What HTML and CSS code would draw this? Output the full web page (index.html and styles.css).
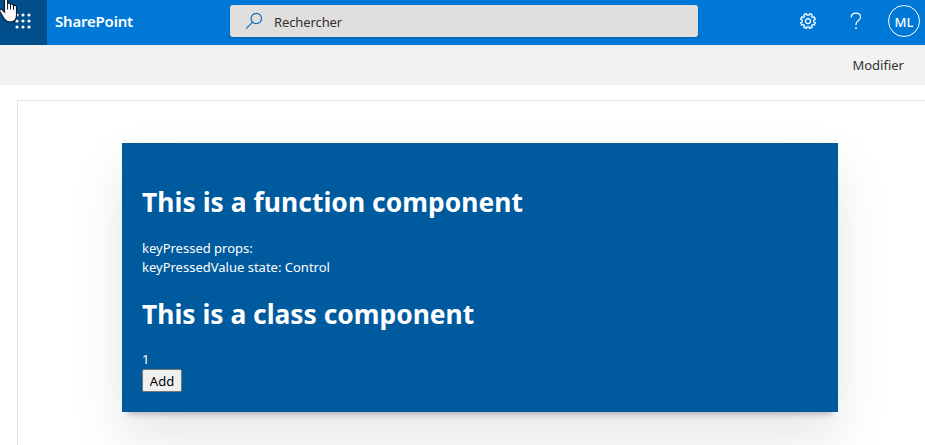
FILE: index.html
```html
<!DOCTYPE html>
<html lang="fr">
<head>
<meta charset="utf-8">
<title>SharePoint</title>
<link rel="stylesheet" href="styles.css">
</head>
<body>
<header class="suite">
  <div class="launcher">
    <svg class="waffle" width="16" height="16" viewBox="0 0 16 16" fill="#fff"><circle cx="2" cy="2" r="1.6"/><circle cx="8" cy="2" r="1.6"/><circle cx="14" cy="2" r="1.6"/><circle cx="2" cy="8" r="1.6"/><circle cx="8" cy="8" r="1.6"/><circle cx="14" cy="8" r="1.6"/><circle cx="2" cy="14" r="1.6"/><circle cx="8" cy="14" r="1.6"/><circle cx="14" cy="14" r="1.6"/></svg>
    <svg class="cursor" width="18" height="24" viewBox="0 0 18 24"><path d="M4.5-2V12L2.3 9.8C1.2 8.7-.8 9.5-.4 11L4.4 19.2C6 21.3 8 22 10 22C14 22 16.5 19.5 16.5 15.5V7C16.5 5.2 14 4.8 13.4 6V5C13 3.5 11 3.4 10.4 4.8V4C10 2.7 8.2 2.7 7.6 3.8V-2Z" fill="#fff" stroke="#101820" stroke-width="1.2"/><path d="M7.6 3.5V9.5M10.5 4.5V9.5M13.5 5.5V10" fill="none" stroke="#101820"/></svg>
  </div>
  <span class="brand">SharePoint</span>
  <div class="search">
    <svg width="18" height="18" viewBox="0 0 18 18" fill="none" stroke="#1469b5" stroke-width="1.2"><circle cx="11.3" cy="6.5" r="5.2"/><path d="M7.6 10.2 1.1 16.7"/></svg>
    <span class="query">Rechercher</span>
  </div>
  <nav class="actions">
    <svg class="gear" width="18" height="18" viewBox="-9 -9 18 18" fill="none" stroke="#fff" stroke-width="1.25" stroke-linejoin="round"><path d="M5.8 1 7.4 1.5 6.3 4.2 4.8 3.4 3.4 4.8 4.2 6.3 1.5 7.4 1 5.8H-1L-1.5 7.4-4.2 6.3-3.4 4.8-4.8 3.4-6.3 4.2-7.4 1.5-5.8 1V-1L-7.4-1.5-6.3-4.2-4.8-3.4-3.4-4.8-4.2-6.3-1.5-7.4-1-5.8H1L1.5-7.4 4.2-6.3 3.4-4.8 4.8-3.4 6.3-4.2 7.4-1.5 5.8-1Z"/><circle r="2.5"/></svg>
    <svg class="help" width="12" height="18" viewBox="0 0 12 18" fill="none" stroke="#fff" stroke-width="1.2"><path d="M1.2 5.5C1.2 2.6 3.1 1.2 5.8 1.2S10.5 2.8 10.5 5.2C10.5 8.7 6 8.8 6 12.3V13.2"/><path d="M6 15.3V17" stroke-width="1.5"/></svg>
    <span class="avatar">ML</span>
  </nav>
</header>
<div class="commands"><span class="edit">Modifier</span></div>
<main class="canvas">
  <section class="card">
    <h1 class="title title-function">This is a function component</h1>
    <p class="line">keyPressed props:</p>
    <p class="line">keyPressedValue state: Control</p>
    <h1 class="title title-class">This is a class component</h1>
    <p class="line">1</p>
    <button class="add" type="button">Add</button>
  </section>
</main>
</body>
</html>
```
FILE: styles.css
```css
* { box-sizing: border-box; }
body {
  margin: 0;
  height: 445px;
  overflow: hidden;
  display: flex;
  flex-direction: column;
  background: #fff;
  font-family: "Noto Sans", "Open Sans", sans-serif;
  font-size: 13px;
  color: #323130;
}
.suite {
  height: 45px;
  flex: none;
  display: flex;
  align-items: flex-start;
  background: #0078d7;
  color: #fff;
}
.launcher {
  position: relative;
  width: 47px;
  height: 45px;
  padding: 13px 0 0 15px;
  background: #004e8c;
}
.waffle { display: block; }
.cursor { position: absolute; left: 0; top: 0; }
.brand {
  width: 175px;
  margin-left: 8px;
  line-height: 42px;
  font-size: 15px;
  font-weight: 600;
  letter-spacing: -0.2px;
}
.search {
  width: 468px;
  height: 32px;
  margin-top: 5px;
  padding-left: 15px;
  display: flex;
  align-items: center;
  border-radius: 3px;
  background: #e1dfdd;
  box-shadow: 0 1px 3px rgba(0, 0, 0, .2);
}
.search svg { margin-top: -1px; }
.query {
  margin-left: 11px;
  padding-top: 2px;
  letter-spacing: -0.1px;
  color: #323130;
}
.actions {
  margin-left: auto;
  padding: 5px 5px 0 0;
  display: flex;
  align-items: center;
}
.gear { margin-right: 33px; }
.help { margin-right: 26px; }
.avatar {
  width: 32px;
  height: 32px;
  border: 1px solid #fff;
  border-radius: 50%;
  line-height: 32px;
  text-align: center;
  font-size: 13px;
  font-weight: 500;
}
.commands {
  height: 40px;
  flex: none;
  padding-right: 21px;
  background: #f3f2f1;
  text-align: right;
  line-height: 40px;
}
.canvas {
  flex: 1;
  margin: 15px 0 0 17px;
  border: solid #e1e1e1;
  border-width: 1px 0 0 1px;
  padding: 42px 0 0 104px;
}
.card {
  width: 716px;
  height: 269px;
  padding: 41px 20px 0;
  background: #005a9e;
  color: #fff;
  box-shadow: 0 8px 6px -6px rgba(0, 0, 0, .25), 0 25px 50px 0 rgba(0, 0, 0, .1);
}
.title {
  margin: 0;
  font-size: 26.4px;
  font-weight: 700;
  line-height: 36px;
  white-space: nowrap;
}
.title-function {
  margin-bottom: 19px;
  letter-spacing: 0.05px;
}
.title-class { margin: 19px 0 18px; }
.line { margin: 0; line-height: 19px; }
.add {
  display: block;
  width: 40px;
  height: 23px;
  padding: 1px 0 0;
  border: 1px solid #767676;
  border-radius: 2px;
  background: #efefef;
  color: #000;
  font: 13px/21px "Noto Sans", "Open Sans", sans-serif;
}
```
